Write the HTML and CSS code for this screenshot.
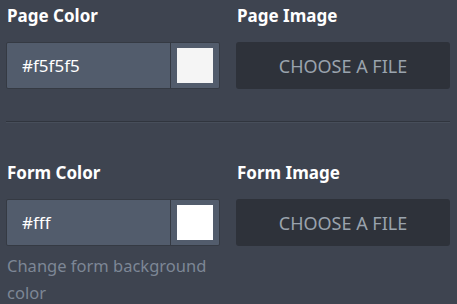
FILE: index.html
```html
<!DOCTYPE html>
<html>
<head>
  <meta charset="UTF-8">
  <title>Form Style</title>
  <link rel="stylesheet" href="styles.css">
</head>
<body>
  <div class="panel">
    <div class="section">
      <div class="field">
        <label>Page Color</label>
        <div class="color-input">
          <input type="text" value="#f5f5f5">
          <span class="swatch"><span class="chip page-chip"></span></span>
        </div>
      </div>
      <div class="field">
        <label>Page Image</label>
        <button class="file-button">CHOOSE A FILE</button>
      </div>
    </div>

    <div class="section">
      <div class="field">
        <label>Form Color</label>
        <div class="color-input">
          <input type="text" value="#fff">
          <span class="swatch"><span class="chip form-chip"></span></span>
        </div>
        <p class="help">Change form background color</p>
      </div>
      <div class="field">
        <label>Form Image</label>
        <button class="file-button">CHOOSE A FILE</button>
      </div>
    </div>
  </div>
</body>
</html>
```

FILE: styles.css
```css
body {
  margin: 0;
  background-color: #3e4450;
  font-family: "Noto Sans", "Open Sans", sans-serif;
  color: #fff;
}

.panel {
  padding: 0 7px 0 6px;
}

.section {
  display: grid;
  grid-template-columns: minmax(0, 1fr) minmax(0, 1fr);
  column-gap: 16px;
  align-items: start;
  padding: 4px 0 32px;
}

.section + .section {
  border-top: 1px solid #30353e;
  box-shadow: inset 0 1px 0 #474e5a;
  padding: 39px 0 0;
}

label {
  display: block;
  font-size: 17px;
  font-weight: bold;
  line-height: 24px;
  margin: 0 0 14px 1px;
}

.color-input {
  display: flex;
  height: 47px;
  box-sizing: border-box;
  border: 1px solid #353a43;
  border-radius: 2px;
  background-color: #525c6c;
}

.color-input input {
  flex: 1;
  min-width: 0;
  border: none;
  border-right: 1px solid #353a43;
  background: transparent;
  color: #fff;
  font-family: inherit;
  font-size: 17px;
  padding: 0 0 0 15px;
  outline: none;
}

.swatch {
  width: 48px;
  display: flex;
  align-items: center;
  justify-content: center;
}

.chip {
  width: 36px;
  height: 35px;
}

.page-chip {
  background-color: #f5f5f5;
}

.form-chip {
  background-color: #fff;
}

.file-button {
  display: block;
  width: 100%;
  height: 47px;
  border: none;
  border-radius: 3px;
  background-color: #2e323a;
  color: #9aa3ad;
  font-family: inherit;
  font-size: 18px;
  cursor: pointer;
}

.help {
  margin: 6px 0 0 1px;
  font-size: 16.5px;
  line-height: 27px;
  color: #7d8796;
}
```
